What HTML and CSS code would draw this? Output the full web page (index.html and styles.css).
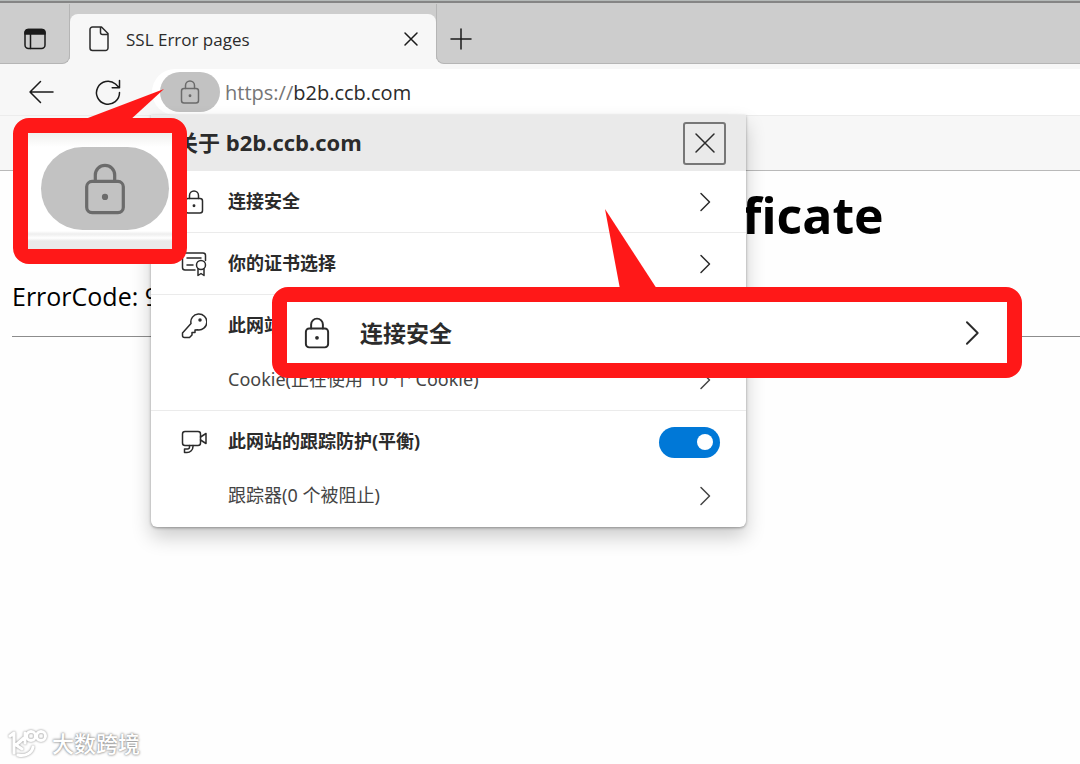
FILE: index.html
```html
<!DOCTYPE html>
<html lang="zh-CN">
<head>
<meta charset="utf-8">
<meta name="viewport" content="width=device-width, initial-scale=1">
<title>SSL Error pages</title>
<link rel="stylesheet" href="styles.css">
</head>
<body>
<svg class="defs" aria-hidden="true">
  <symbol id="lock" viewBox="0 0 26 26"><path d="M8.500 9.500V6.500a4.500 4.500 0 0 1 9 0v3" /><rect x="4.500" y="9.500" width="17" height="14.500" rx="2.500"/><circle cx="13" cy="16.700" r=".7" fill="currentColor"/></symbol>
  <symbol id="chevron" viewBox="0 0 30 30"><path d="M11 6.500l8.500 8.500-8.500 8.500"/></symbol>
</svg>
<div class="browser">
  <header>
    <div class="tabbar">
      <div class="tab-actions">
        <button class="icon-button" aria-label="Tab actions"><svg width="24" height="24" viewBox="0 0 24 24"><rect x="2" y="2.500" width="20" height="19" rx="3.500"/><path d="M2 7V5.500a3 3 0 0 1 3-3h14a3 3 0 0 1 3 3V7z" fill="currentColor"/><path d="M7.500 7v14.500"/></svg></button>
      </div>
      <div class="tab">
        <svg width="24" height="28" viewBox="0 0 24 28"><path d="M5.500 2h9L21 8.500V23a2.500 2.500 0 0 1-2.500 2.500h-13A2.500 2.500 0 0 1 3 23V4.500A2.500 2.500 0 0 1 5.500 2zM13.500 2.500V7.500a2 2 0 0 0 2 2H21"/></svg>
        <span class="tab-title">SSL Error pages</span>
        <button class="icon-button tab-close" aria-label="Close tab"><svg width="24" height="24" viewBox="0 0 24 24"><path d="M6 6l12 12M18 6L6 18"/></svg></button>
      </div>
      <div class="tab-rest">
        <button class="icon-button" aria-label="New tab"><svg width="24" height="24" viewBox="0 0 24 24"><path d="M12 2v20M2 12h20"/></svg></button>
      </div>
    </div>
    <div class="toolbar">
      <button class="icon-button" aria-label="Back"><svg width="28" height="28" viewBox="0 0 28 28"><path d="M26 14H3M13.500 3.500L3 14l10.500 10.500"/></svg></button>
      <button class="icon-button" aria-label="Refresh"><svg width="28" height="28" viewBox="0 0 28 28"><path d="M25.500 14.500A11.500 11.500 0 1 1 21.500 6L25 9.500M25.500 2.500v7.300h-7.300"/></svg></button>
      <div class="address">
        <button class="site-info" aria-label="Site information"><svg width="26" height="26"><use href="#lock"/></svg></button>
        <label class="scheme" for="url">https://</label>
        <input id="url" class="url" type="text" value="b2b.ccb.com">
      </div>
    </div>
    <div class="strip"></div>
  </header>
  <main class="page">
    <h1 class="page-title">certificate</h1>
    <p class="error">ErrorCode: 9</p>
    <hr class="rule">
  </main>

  <section class="popover" aria-label="Site information">
    <div class="popover-head">
      <h2 class="popover-title">关于 b2b.ccb.com</h2>
      <button class="popover-close" aria-label="Close"><svg width="24" height="24" viewBox="0 0 24 24"><path d="M3 3l18 18M21 3L3 21"/></svg></button>
    </div>
    <button class="row divided"><svg class="row-icon"><use href="#lock"/></svg><span class="row-label">连接安全</span><svg class="chevron"><use href="#chevron"/></svg></button>
    <button class="row divided"><svg class="row-icon" viewBox="0 0 26 26"><path d="M14 19H4a2.500 2.500 0 0 1-2.500-2.500v-12A2.500 2.500 0 0 1 4 2h18a2.500 2.500 0 0 1 2.500 2.500v5M6 7h14M6 14h6"/><circle cx="20" cy="14" r="4.500"/><path d="M17 18v6.500l3-2 3 2V18"/></svg><span class="row-label">你的证书选择</span><svg class="chevron"><use href="#chevron"/></svg></button>
    <div class="group divided">
      <div class="row"><svg class="row-icon" viewBox="0 0 26 26"><path d="M10 10.500a8 8 0 1 1 6.500 6.300L14 17v2.500h-3V22l-2.500 2.500H3.500a2 2 0 0 1-2-2V20z"/><circle cx="19" cy="7" r="1" fill="currentColor"/></svg><span class="row-label">此网站的权限</span></div>
      <button class="row subrow"><span class="row-label">Cookie(正在使用 10 个 Cookie)</span><svg class="chevron"><use href="#chevron"/></svg></button>
    </div>
    <div class="group">
      <div class="row"><svg class="row-icon" viewBox="0 0 26 26"><rect x="1.500" y="2.500" width="18" height="14" rx="2.500"/><path d="M19.500 8l5.500-3.500v10L19.500 11M8.500 16.500v1.500a2 2 0 0 1-2 2H3.500v3.500H6a6 6 0 0 0 6-6v-1"/></svg><label class="row-label" for="tracking">此网站的跟踪防护(平衡)</label><input id="tracking" class="switch" type="checkbox" role="switch" checked></div>
      <button class="row subrow"><span class="row-label">跟踪器(0 个被阻止)</span><svg class="chevron"><use href="#chevron"/></svg></button>
    </div>
  </section>

  <div class="callout callout-lock">
    <svg class="tail tail-lock" viewBox="0 0 84 32"><path d="M0 32L84 0 49 32z"/></svg>
    <div class="magnified-bar"><div class="magnified-pill"><svg width="56" height="56"><use href="#lock"/></svg></div></div>
  </div>
  <div class="callout callout-row">
    <svg class="tail tail-row" viewBox="0 0 52 80"><path d="M0 0L15 80H52z"/></svg>
    <div class="magnified-row"><svg width="34" height="34"><use href="#lock"/></svg><span class="magnified-label">连接安全</span><svg class="magnified-chevron"><use href="#chevron"/></svg></div>
  </div>

  <footer class="watermark">
    <svg width="40" height="30" viewBox="0 0 40 30"><path d="M2 8l4-3v20M16 10L8 17l6 4M10 27c7 2 14-2 15-8M17 5v10"/><circle cx="23" cy="8" r="4.500"/><circle cx="33" cy="8" r="4.500"/></svg>
    <span>大数跨境</span>
  </footer>
</div>
</body>
</html>
```
FILE: styles.css
```css
* { box-sizing: border-box; }

body {
  margin: 0;
  background: #fefefe;
  color: #2b2b2b;
  font-family: "Noto Sans", "Noto Sans CJK SC", sans-serif;
  font-size: 18px;
}

button, input { font: inherit; color: inherit; }

button {
  margin: 0;
  padding: 0;
  border: 0;
  background: none;
}

svg {
  display: block;
  flex: none;
  fill: none;
  stroke: currentColor;
  stroke-width: 1.5;
  stroke-linecap: round;
  stroke-linejoin: round;
}

.defs { position: absolute; width: 0; height: 0; }

.browser {
  position: relative;
  min-height: 100vh;
  overflow: hidden;
}

.icon-button { display: grid; place-items: center; color: #1b1b1b; }

.tabbar {
  display: flex;
  height: 64px;
  padding-top: 3px;
  border-top: 1px solid #b4b9b8;
  background: linear-gradient(#858585 2px, #cdcdcd 2px, #cdcdcd 58px, #f7f7f7 58px);
}

.tab-actions, .tab-rest {
  display: flex;
  align-items: center;
  padding-top: 10px;
  border-bottom: 1px solid #b5b5b5;
  background: #cdcdcd;
}

.tab-actions {
  width: 70px;
  padding-left: 23px;
  border-right: 1px solid #b5b5b5;
  border-bottom-right-radius: 8px;
}

.tab-rest {
  flex: 1;
  padding-left: 12px;
  border-left: 1px solid #b5b5b5;
  border-bottom-left-radius: 8px;
}

.tab {
  display: flex;
  align-items: center;
  width: 366px;
  margin-top: 10px;
  padding: 0 13px 0 17px;
  border-radius: 8px 8px 0 0;
  background: #f7f7f7;
}

.tab-title {
  flex: 1;
  margin-left: 15px;
  font-family: "Open Sans", sans-serif;
  font-size: 17px;
}

.toolbar {
  display: flex;
  align-items: center;
  gap: 39px;
  height: 51px;
  padding: 5px 0 0 27px;
  background: #f7f7f7;
}

.address {
  display: flex;
  align-items: center;
  flex: 1;
  height: 46px;
  margin-left: -9px;
  padding-left: 8px;
  border-radius: 23px 0 0 23px;
  background: #fff;
  font-family: "Open Sans", sans-serif;
  font-size: 20px;
}

.site-info {
  display: grid;
  place-items: center;
  width: 60px;
  height: 40px;
  border-radius: 20px;
  background: #c2c2c2;
  color: #6b6b6b;
}

.scheme { margin-left: 5px; color: #767676; }

.url {
  flex: 1;
  min-width: 0;
  padding: 0;
  border: 0;
  outline: 0;
  background: none;
}

.strip {
  height: 56px;
  border-top: 1px solid #ececec;
  border-bottom: 1px solid #b9b9b9;
  background: #f7f7f7;
}

.page {
  padding: 10px 0 0 12px;
  color: #000;
  font-family: "Open Sans", sans-serif;
}

.page-title {
  margin: 0;
  padding-left: 615px;
  font-size: 50px;
  line-height: 68px;
}

.error { margin: 29px 0 0; font-size: 25px; line-height: 36px; }

.rule { margin: 22px 0 0; border: 0; border-top: 1px solid #8c8c8c; }

.popover {
  position: absolute;
  top: 115px;
  left: 151px;
  width: 595px;
  border-radius: 0 0 6px 6px;
  background: #fff;
  box-shadow: 0 1px 3px rgba(0, 0, 0, .35), 0 10px 20px rgba(0, 0, 0, .2);
}

.popover-head {
  display: flex;
  align-items: center;
  justify-content: space-between;
  height: 56px;
  padding: 0 20px 0 25px;
  background: #eaeaea;
}

.popover-title {
  margin: 0;
  padding-bottom: 4px;
  font-family: "Open Sans", "Noto Sans CJK SC", sans-serif;
  font-size: 22px;
}

.popover-close {
  display: grid;
  place-items: center;
  width: 43px;
  height: 43px;
  border: 2px solid #777;
  border-radius: 3px;
}

.row {
  display: flex;
  align-items: center;
  width: 100%;
  height: 62px;
  padding: 0 26px 0 30px;
  text-align: left;
  font-weight: 700;
}

.divided { border-bottom: 1px solid #ebebeb; }
.group { padding-bottom: 8px; }
.group.divided { padding-bottom: 7px; }

.row-icon { width: 26px; height: 26px; margin-right: 21px; }
.row-label { flex: 1; padding-bottom: 4px; }

.subrow {
  height: 46px;
  padding-left: 77px;
  color: #444;
  font-weight: 400;
}

.chevron { width: 30px; height: 30px; }

.switch {
  display: flex;
  align-items: center;
  justify-content: flex-end;
  width: 61px;
  height: 31px;
  margin: 0;
  padding: 0 7px;
  border-radius: 16px;
  background: #0078d7;
  appearance: none;
}

.switch::before {
  width: 16px;
  height: 16px;
  border-radius: 50%;
  background: #fff;
  content: "";
}

.switch:not(:checked) { justify-content: flex-start; background: #888; }

.callout {
  position: absolute;
  border: 15px solid #ff1818;
  border-radius: 16px;
  background: #ff1818;
}

.callout-lock { top: 118px; left: 13px; width: 174px; }
.callout-row { top: 287px; left: 272px; width: 750px; }

.tail { position: absolute; fill: #ff1818; stroke: none; }
.tail-lock { top: -44px; left: 52px; width: 84px; height: 32px; }
.tail-row { top: -93px; left: 318px; width: 52px; height: 80px; }

.magnified-bar {
  padding: 14px 3px 19px 13px;
  background: linear-gradient(#f0f0ee, #fff 14px, #fff 98px, #eee 101px, #fff 105px, #eaeaea 108px);
}

.magnified-pill {
  display: grid;
  place-items: center;
  height: 83px;
  border-radius: 42px;
  background: #c2c2c2;
  color: #6b6b6b;
}

.magnified-row {
  display: flex;
  align-items: center;
  height: 61px;
  padding: 0 16px 0 13px;
  background: #fff;
}

.magnified-label {
  flex: 1;
  margin-left: 26px;
  padding-bottom: 2px;
  font-size: 23px;
  font-weight: 700;
}

.magnified-chevron { width: 38px; height: 38px; }

.watermark {
  position: absolute;
  bottom: 6px;
  left: 8px;
  display: flex;
  align-items: center;
  gap: 4px;
  color: #fff;
  font-size: 22px;
  font-weight: 500;
  line-height: 30px;
  text-shadow: 0 0 2px #888, 0 0 3px #999;
}

.watermark svg { stroke-width: 3; filter: drop-shadow(0 0 1px #888); }
```
